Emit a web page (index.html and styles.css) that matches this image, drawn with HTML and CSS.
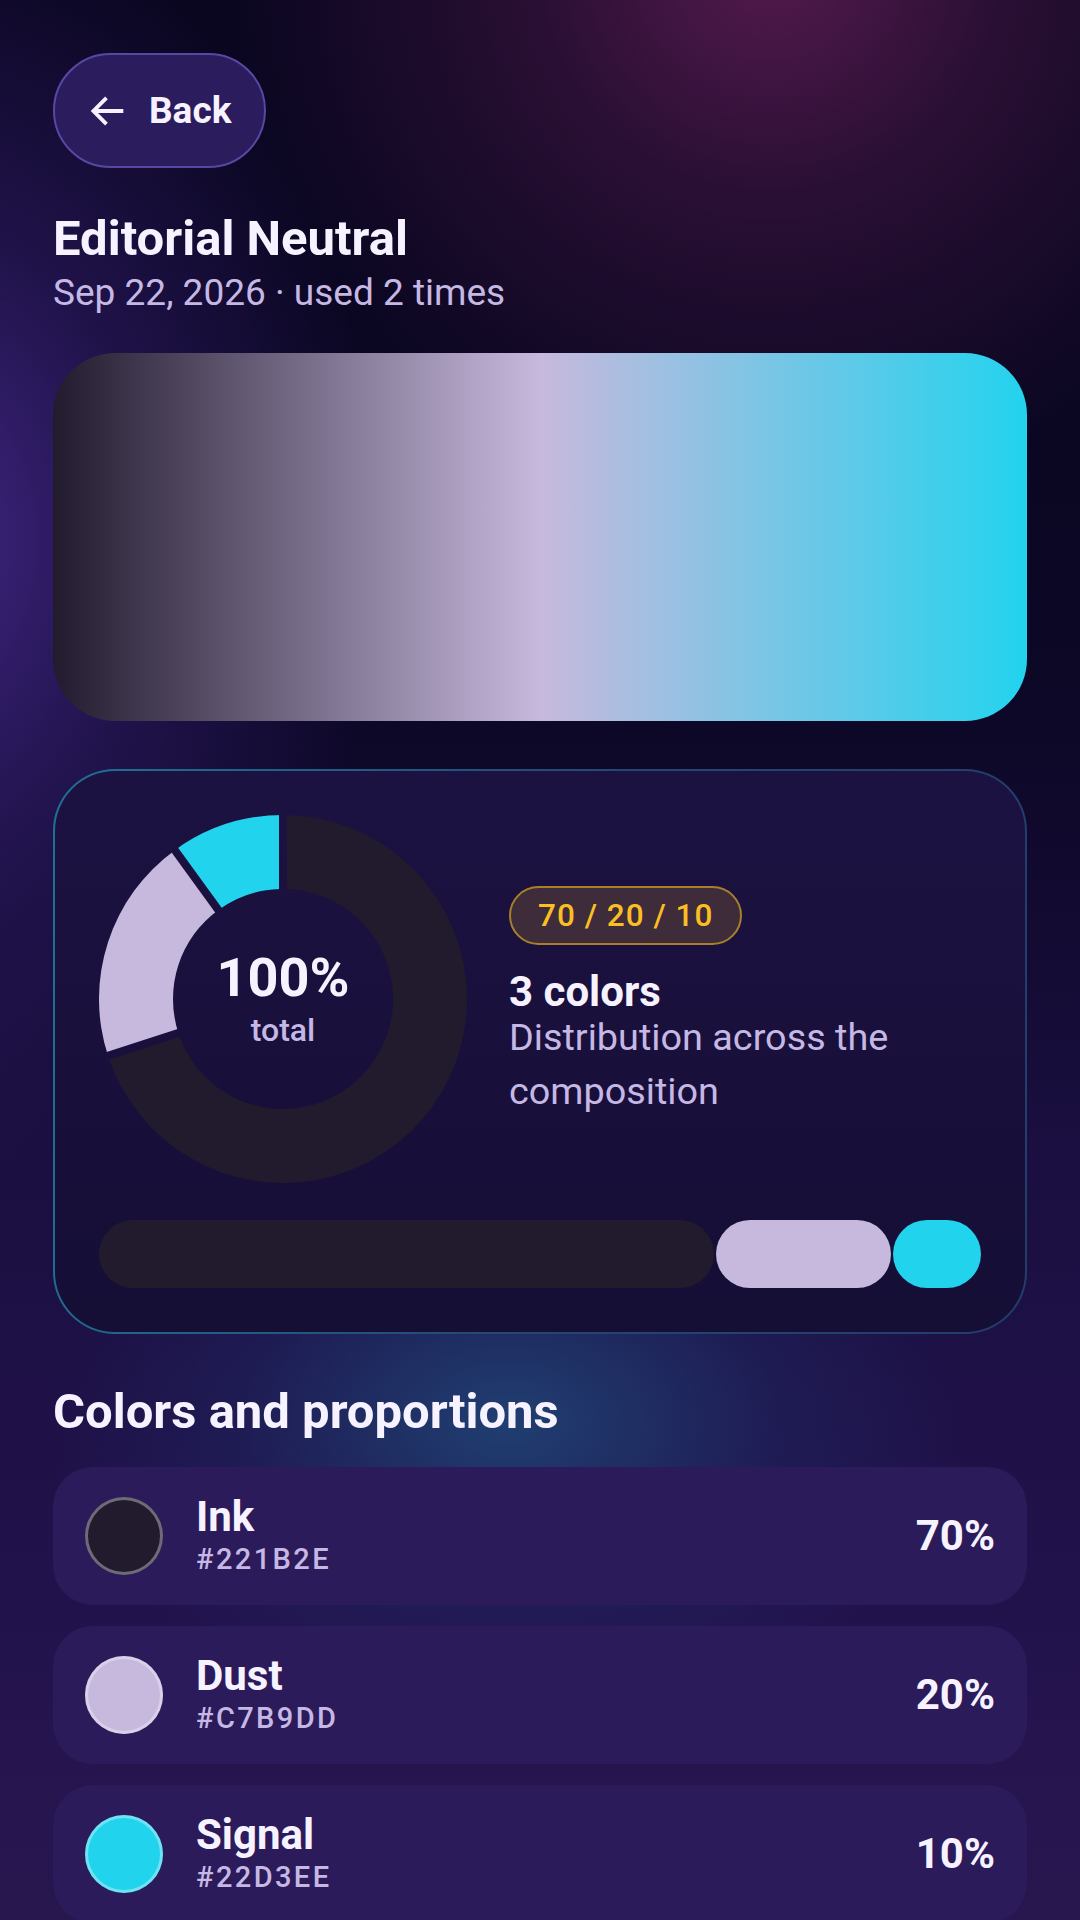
FILE: index.html
```html
<!DOCTYPE html>
<html lang="en">
<head>
<meta charset="utf-8">
<title>Editorial Neutral</title>
<link rel="stylesheet" href="styles.css">
</head>
<body>
<main class="page">
  <button class="back-btn" type="button">
    <svg class="back-icon" viewBox="0 0 24 24" aria-hidden="true"><path d="M20 12H4.6M11.2 5.2 4.4 12l6.8 6.8"/></svg>
    <span>Back</span>
  </button>

  <h1 class="title">Editorial Neutral</h1>
  <p class="subtitle">Sep 22, 2026 · used 2 times</p>

  <div class="hero"></div>

  <section class="card">
    <div class="card-top">
      <div class="donut">
        <svg class="donut-svg" viewBox="0 0 368 368" aria-hidden="true">
          <defs>
            <mask id="gaps">
              <rect x="-20" y="-20" width="408" height="408" fill="#fff"/>
              <g stroke="#000" stroke-width="8">
                <line x1="184" y1="184" x2="184" y2="-16"/>
                <line x1="184" y1="184" x2="-6.2" y2="245.8"/>
                <line x1="184" y1="184" x2="66.4" y2="22.2"/>
              </g>
            </mask>
          </defs>
          <g mask="url(#gaps)">
            <path class="seg-ink" d="M184 0A184 184 0 1 1 9 240.86L79.38 217.99A110 110 0 1 0 184 74Z"/>
            <path class="seg-dust" d="M9 240.86A184 184 0 0 1 75.85 35.14L119.34 95.01A110 110 0 0 0 79.38 217.99Z"/>
            <path class="seg-signal" d="M75.85 35.14A184 184 0 0 1 184 0L184 74A110 110 0 0 0 119.34 95.01Z"/>
          </g>
        </svg>
        <div class="donut-label">
          <span class="donut-value">100%</span>
          <span class="donut-caption">total</span>
        </div>
      </div>
      <div class="summary">
        <span class="ratio-badge">70 / 20 / 10</span>
        <h2 class="summary-title">3 colors</h2>
        <p class="summary-text">Distribution across the composition</p>
      </div>
    </div>
    <div class="bar">
      <span class="bar-seg bar-ink"></span>
      <span class="bar-seg bar-dust"></span>
      <span class="bar-seg bar-signal"></span>
    </div>
  </section>

  <h2 class="section-title">Colors and proportions</h2>

  <ul class="color-list">
    <li class="color-row">
      <span class="swatch swatch-ink"></span>
      <div class="color-info">
        <span class="color-name">Ink</span>
        <span class="color-hex">#221B2E</span>
      </div>
      <span class="color-pct">70%</span>
    </li>
    <li class="color-row">
      <span class="swatch swatch-dust"></span>
      <div class="color-info">
        <span class="color-name">Dust</span>
        <span class="color-hex">#C7B9DD</span>
      </div>
      <span class="color-pct">20%</span>
    </li>
    <li class="color-row">
      <span class="swatch swatch-signal"></span>
      <div class="color-info">
        <span class="color-name">Signal</span>
        <span class="color-hex">#22D3EE</span>
      </div>
      <span class="color-pct">10%</span>
    </li>
  </ul>
</main>
</body>
</html>
```

FILE: styles.css
```css
* {
  box-sizing: border-box;
}

html, body {
  margin: 0;
  padding: 0;
}

body {
  width: 1080px;
  height: 1920px;
  overflow: hidden;
  font-family: Roboto, "Noto Sans", "Liberation Sans", sans-serif;
  color: #f6f2ff;
  background:
    radial-gradient(circle at 770px -40px, rgba(92, 28, 82, 0.9) 0, rgba(66, 22, 66, 0.55) 240px, rgba(40, 14, 50, 0) 540px),
    radial-gradient(ellipse 460px 640px at -80px 540px, rgba(68, 40, 138, 0.95) 0, rgba(52, 30, 112, 0.5) 50%, rgba(40, 20, 90, 0) 100%),
    radial-gradient(ellipse 460px 300px at 510px 1420px, rgba(32, 74, 124, 0.8) 0, rgba(30, 50, 110, 0.3) 60%, rgba(30, 40, 100, 0) 100%),
    linear-gradient(180deg, #0a0620 0, #0b0724 640px, #120a30 900px, #1a0f40 1150px, #22124c 1600px, #28164f 1920px);
}

.page {
  padding: 53px 53px 0;
  display: flex;
  flex-direction: column;
  align-items: stretch;
}

/* Back button */
.back-btn {
  align-self: flex-start;
  display: inline-flex;
  align-items: center;
  gap: 18px;
  height: 115px;
  padding: 0 33px 0 30px;
  border: 2.5px solid #5a47a4;
  border-radius: 58px;
  background: #2b1c5e;
  color: #f6f2ff;
  font-family: Roboto, "Noto Sans", sans-serif;
  font-size: 37px;
  font-weight: 700;
  cursor: pointer;
}

.back-icon {
  width: 46px;
  height: 46px;
  fill: none;
  stroke: #f6f2ff;
  stroke-width: 2;
  stroke-linecap: butt;
  stroke-linejoin: miter;
}

.title {
  margin: 41px 0 0;
  font-size: 49px;
  line-height: 60px;
  font-weight: 700;
  color: #f6f2ff;
}

.subtitle {
  margin: 0;
  font-size: 37px;
  line-height: 48px;
  font-weight: 400;
  color: #c6b8e4;
}

.hero {
  margin-top: 36px;
  height: 368px;
  border-radius: 62px;
  background: linear-gradient(90deg, #221b2e 0%, #c7b9dd 50%, #22d3ee 100%);
}

/* Card */
.card {
  margin-top: 48px;
  padding: 44px;
  border: 2.5px solid transparent;
  border-radius: 62px;
  background:
    linear-gradient(180deg, #1c1242 0%, #150e35 100%) padding-box,
    linear-gradient(100deg, #1f7292 0%, #254574 55%, #233c6c 100%) border-box;
}

.card-top {
  display: flex;
  align-items: center;
  gap: 42px;
}

.donut {
  flex: none;
  width: 368px;
  height: 368px;
  display: grid;
}

.donut-svg,
.donut-label {
  grid-area: 1 / 1;
}

.donut-svg {
  width: 368px;
  height: 368px;
  display: block;
}

.seg-ink { fill: #221b2e; }
.seg-dust { fill: #c7b9dd; }
.seg-signal { fill: #22d3ee; }

.donut-label {
  display: flex;
  flex-direction: column;
  align-items: center;
  justify-content: center;
  padding-bottom: 2px;
}

.donut-value {
  font-size: 54px;
  line-height: 54px;
  font-weight: 700;
  color: #f6f2ff;
}

.donut-caption {
  margin-top: 9px;
  font-size: 32px;
  line-height: 32px;
  font-weight: 500;
  color: #c6b8e4;
}

.summary {
  display: flex;
  flex-direction: column;
  align-items: flex-start;
  padding-top: 6px;
}

.ratio-badge {
  display: inline-flex;
  align-items: center;
  height: 59px;
  padding: 0 27px;
  border: 2.5px solid #a98028;
  border-radius: 30px;
  background: #3e2c3b;
  color: #fbbf24;
  font-size: 31.5px;
  font-weight: 500;
  letter-spacing: 1px;
}

.summary-title {
  margin: 26px 0 0;
  font-size: 42px;
  line-height: 42px;
  font-weight: 700;
  color: #f6f2ff;
}

.summary-text {
  margin: -3px 0 0;
  font-size: 37.8px;
  line-height: 54px;
  font-weight: 400;
  color: #c6b8e4;
}

.bar {
  margin-top: 37px;
  display: flex;
  gap: 2px;
  height: 68px;
}

.bar-seg {
  flex-basis: 0;
  border-radius: 34px;
}

.bar-ink { flex-grow: 70; background: #221b2e; }
.bar-dust { flex-grow: 20; background: #c7b9dd; }
.bar-signal { flex-grow: 10; background: #22d3ee; }

/* Colors list */
.section-title {
  margin: 49px 0 0;
  font-size: 49px;
  line-height: 58.8px;
  font-weight: 700;
  color: #f6f2ff;
}

.color-list {
  list-style: none;
  margin: 25px 0 0;
  padding: 0;
  display: flex;
  flex-direction: column;
  gap: 21px;
}

.color-row {
  display: flex;
  align-items: center;
  height: 138px;
  padding: 0 32px;
  border-radius: 40px;
  background: #2b1b5a;
}

.swatch {
  flex: none;
  width: 78px;
  height: 78px;
  border-radius: 50%;
  box-shadow: inset 0 0 0 3px rgba(255, 255, 255, 0.35);
}

.swatch-ink { background: #221b2e; }
.swatch-dust { background: #c7b9dd; }
.swatch-signal { background: #22d3ee; }

.color-info {
  flex: 1;
  display: flex;
  flex-direction: column;
  margin-left: 33px;
}

.color-name {
  font-size: 42px;
  line-height: 48.3px;
  font-weight: 700;
  color: #f6f2ff;
}

.color-hex {
  font-size: 29px;
  line-height: 37.7px;
  font-weight: 500;
  letter-spacing: 2.4px;
  color: #c6b8e4;
}

.color-pct {
  font-size: 42px;
  font-weight: 700;
  color: #f6f2ff;
}
```
